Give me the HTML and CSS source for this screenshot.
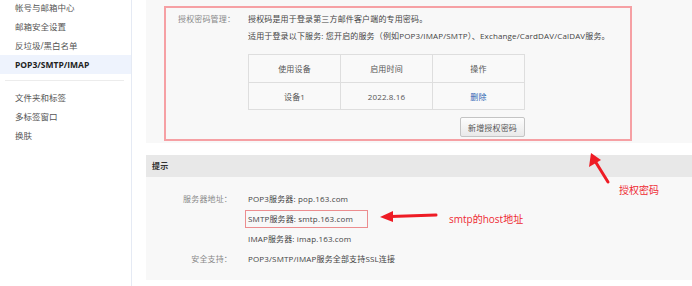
FILE: index.html
```html
<!DOCTYPE html>
<html lang="zh-CN">
<head>
    <meta charset="UTF-8">
    <title>POP3/SMTP/IMAP 设置</title>
    <link rel="stylesheet" href="styles.css">
</head>
<body>
    <div class="page">
        <ul class="sidebar">
            <li>帐号与邮箱中心</li>
            <li>邮箱安全设置</li>
            <li>反垃圾/黑白名单</li>
            <li class="active">POP3/SMTP/IMAP</li>
            <li class="sep"></li>
            <li>文件夹和标签</li>
            <li>多标签窗口</li>
            <li>换肤</li>
        </ul>

        <div class="main">
            <div class="auth-panel">
                <div class="auth-box">
                    <div class="row">
                        <span class="label">授权密码管理：</span>
                        <div class="value">
                            <p>授权码是用于登录第三方邮件客户端的专用密码。</p>
                            <p>适用于登录以下服务: 您开启的服务（例如POP3/IMAP/SMTP）、Exchange/CardDAV/CalDAV服务。</p>
                            <table class="devices">
                                <tr>
                                    <th>使用设备</th>
                                    <th>启用时间</th>
                                    <th>操作</th>
                                </tr>
                                <tr>
                                    <td>设备1</td>
                                    <td>2022.8.16</td>
                                    <td><a href="#" class="del">删除</a></td>
                                </tr>
                            </table>
                            <div class="actions">
                                <button>新增授权密码</button>
                            </div>
                        </div>
                    </div>
                </div>
            </div>

            <div class="tips">
                <div class="tips-head">提示</div>
                <div class="tips-body">
                    <div class="row">
                        <span class="label">服务器地址：</span>
                        <div class="value">
                            <p>POP3服务器: pop.163.com</p>
                            <p><span class="mark">SMTP服务器: smtp.163.com</span></p>
                            <p>IMAP服务器: imap.163.com</p>
                        </div>
                    </div>
                    <div class="row">
                        <span class="label">安全支持：</span>
                        <div class="value">
                            <p>POP3/SMTP/IMAP服务全部支持SSL连接</p>
                        </div>
                    </div>
                </div>
            </div>
        </div>
    </div>

    <svg class="notes" width="692" height="286" viewBox="0 0 692 286">
        <g stroke="#ee1c25" stroke-width="3" stroke-linecap="round" fill="none">
            <path d="M436 215 L391 216.5"/>
            <path d="M608 182 L595 161"/>
        </g>
        <g fill="#ee1c25">
            <polygon points="380,217 393,211 393,222"/>
            <polygon points="591,153 589,167 601,160"/>
        </g>
    </svg>
    <div class="note note-smtp">smtp的host地址</div>
    <div class="note note-auth">授权密码</div>
</body>
</html>
```

FILE: styles.css
```css
body {
    margin: 0;
    font-family: "Open Sans", "Noto Sans CJK SC", sans-serif;
    background: #fff;
    color: #444;
    position: relative;
    width: 692px;
    height: 286px;
    overflow: hidden;
}
p {
    margin: 0;
}
.page {
    display: flex;
    height: 286px;
}
.sidebar {
    list-style: none;
    margin: -2px 0 0 0;
    padding: 0;
    width: 131px;
    border-right: 1px solid #e5eaf4;
    font-size: 8.5px;
    color: #555;
}
.sidebar li {
    height: 19px;
    line-height: 19px;
    padding-left: 15px;
}
.sidebar li.active {
    background: #eef3fd;
    color: #222;
    font-weight: bold;
}
.sidebar li.sep {
    height: 1px;
    background: #ececec;
    margin: 6px 7px 7px 5px;
    padding: 0;
}
.main {
    flex: 1;
    padding-left: 14px;
    font-size: 8px;
    letter-spacing: 0.15px;
}
.auth-panel {
    background: #f8f8f8;
    padding: 6px 60px 2px 18px;
}
.auth-box {
    border: 2px solid #f6a0a4;
    padding: 2px 12px 2px 12px;
}
.row {
    display: flex;
}
.label {
    width: 70px;
    color: #888;
    line-height: 17px;
}
.value {
    line-height: 17px;
}
.devices {
    margin-top: 10px;
    border-collapse: collapse;
    width: 277px;
    background: #f9f9f9;
}
.devices th, .devices td {
    border: 1px solid #dedede;
    width: 33%;
    text-align: center;
    font-weight: normal;
    color: #555;
    padding: 0;
}
.devices th {
    height: 27px;
}
.devices td {
    height: 26px;
}
.del {
    color: #2d64b3;
    text-decoration: none;
}
.actions {
    width: 277px;
    display: flex;
    justify-content: flex-end;
    margin-top: 7px;
}
button {
    width: 65px;
    height: 20px;
    font-family: inherit;
    font-size: 8px;
    letter-spacing: 0.15px;
    color: #555;
    background: linear-gradient(#fdfdfd, #e9e9e9);
    border: 1px solid #c4c4c4;
    border-radius: 2px;
    padding: 0;
}
.tips {
    margin-top: 12px;
}
.tips-head {
    background: #e8e8e8;
    height: 22px;
    line-height: 22px;
    padding-left: 6px;
    font-weight: bold;
    color: #333;
}
.tips-body {
    background: #f8f8f8;
    padding: 12px 0 11px 0;
}
.tips-body .label {
    width: 86px;
    text-align: right;
    padding-right: 16px;
    line-height: 20px;
}
.tips-body .value {
    line-height: 20px;
}
.mark {
    display: inline-block;
    width: 119px;
    line-height: 16px;
    border: 1px solid #ec8d8f;
    padding-left: 2px;
    margin-left: -3px;
}
.notes {
    position: absolute;
    left: 0;
    top: 0;
}
.note {
    position: absolute;
    font-size: 10px;
    color: #ee2a33;
    line-height: 12px;
}
.note-smtp {
    left: 449px;
    top: 213px;
}
.note-auth {
    left: 619px;
    top: 184px;
}
```
